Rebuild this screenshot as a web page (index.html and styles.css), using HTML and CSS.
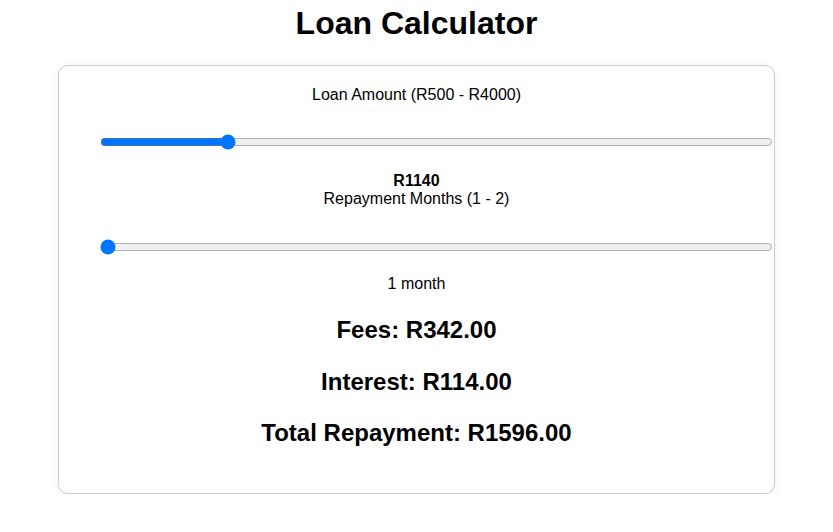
FILE: index.html
```html
<!DOCTYPE html>
<html lang="en">
<head>
<meta charset="utf-8">
<title>Loan Calculator</title>
<link rel="stylesheet" href="styles.css">
</head>
<body>
<h1 class="title">Loan Calculator</h1>
<div class="card">
  <label class="label" for="amount">Loan Amount (R500 - R4000)</label>
  <input class="slider slider-amount" id="amount" type="range" min="500" max="4000" step="10" value="1140">
  <div class="value">R1140</div>
  <label class="label" for="months">Repayment Months (1 - 2)</label>
  <input class="slider slider-months" id="months" type="range" min="1" max="2" step="1" value="1">
  <div class="value-plain">1 month</div>
  <div class="results">
    <h2 class="result">Fees: R342.00</h2>
    <h2 class="result">Interest: R114.00</h2>
    <h2 class="result">Total Repayment: R1596.00</h2>
  </div>
</div>
</body>
</html>
```
FILE: styles.css
```css
html, body {
  margin: 0;
  padding: 0;
  background: #ffffff;
}
body {
  font-family: "Liberation Sans", Arial, sans-serif;
  font-size: 16px;
  color: #000;
}
.title {
  text-align: center;
  font-size: 32px;
  font-weight: bold;
  margin: 5px 0 23px;
  line-height: 37px;
}
.card {
  width: 675px;
  margin: 0 auto;
  padding: 20px 20px 22px;
  border: 1px solid #cccccc;
  border-radius: 10px;
  box-shadow: 0 2px 10px rgba(0, 0, 0, 0.07);
  text-align: center;
  background: #fff;
}
.label {
  display: block;
  line-height: 18px;
}
.slider {
  display: block;
  width: 673px;
  height: 16px;
  padding: 0;
}
.slider-amount {
  margin: 30px 0 21px 21px;
}
.slider-months {
  margin: 31px 0 20px 21px;
}
.value {
  font-weight: bold;
  line-height: 19px;
}
.value-plain {
  line-height: 18px;
}
.results {
  margin-top: 23px;
}
.result {
  font-size: 24px;
  font-weight: bold;
  line-height: 27.6px;
  margin: 0 0 24px;
}
```
